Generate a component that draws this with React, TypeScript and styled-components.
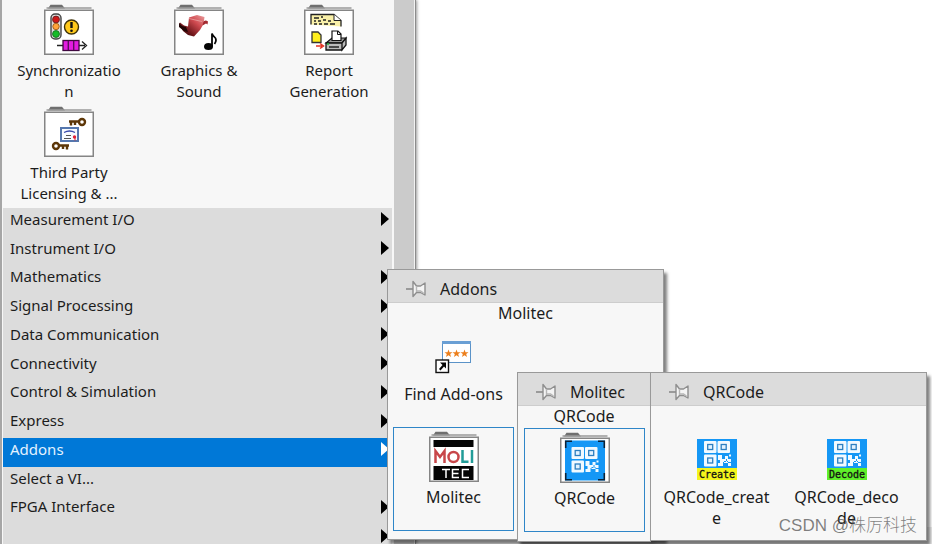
import React from 'react';
import styled, { createGlobalStyle, css } from 'styled-components';

const GlobalStyle = createGlobalStyle`
  * { box-sizing: border-box; }
  body {
    margin: 0;
    background: #fff;
    color: #1c1c1c;
    font-family: 'Noto Sans', 'Noto Sans CJK SC', sans-serif;
    font-size: 15px;
    line-height: 21px;
    overflow: hidden;
  }
  button {
    margin: 0;
    padding: 0;
    border: 0;
    background: none;
    color: inherit;
    font: inherit;
    cursor: default;
  }
  svg { display: block; flex: none; }
`;

const Desktop = styled.main`
  position: relative;
  height: 100vh;
  overflow: hidden;
`;

const Palette = styled.section`
  position: relative;
  display: flex;
  width: 416px;
  height: 100%;
  border-left: 2px solid #a6a6a6;
  border-right: 1px solid #8c8c8c;
  background: #f7f7f7;
  box-shadow: 1px 0 3px rgba(0, 0, 0, 0.4);
`;

const PaletteBody = styled.div`
  flex: 1;
  display: flex;
  flex-direction: column;
  padding: 4px 2px 0 1px;
`;

const ScrollTrack = styled.div`
  width: 21px;
  background: #cbcbcb;
  border-right: 1px solid #f2f2f2;
`;

const IconGrid = styled.div`
  flex: none;
  display: grid;
  grid-template-columns: repeat(3, 130px);
  grid-auto-rows: 102px;
  width: 388px;
  padding-left: 1px;
`;

const Cell = styled.button<{ $framed?: boolean; $gap?: number }>`
  display: flex;
  flex-direction: column;
  align-items: center;
  justify-content: flex-start;
  gap: ${({ $gap = 4 }) => $gap}px;
  white-space: nowrap;
  ${({ $framed }) =>
    $framed &&
    css`
      height: 104px;
      padding-top: 4px;
      outline: 1px solid #2f86c8;
      outline-offset: -1px;
    `}
`;

const CategoryList = styled.nav`
  flex: none;
  display: grid;
  grid-template-rows: repeat(12, 1fr);
  height: 345px;
  background: #dcdcdc;
`;

const Category = styled.button<{ $selected?: boolean }>`
  display: flex;
  align-items: center;
  justify-content: space-between;
  padding: 0 3px 6px 7px;
  text-align: left;
  background: ${({ $selected }) => ($selected ? '#0078d7' : 'transparent')};
  color: ${({ $selected }) => ($selected ? '#e4f2ff' : '#1c1c1c')};
`;

const Flyout = styled.section<{ $left: number; $top: number; $width: number; $height: number }>`
  position: absolute;
  left: ${({ $left }) => $left}px;
  top: ${({ $top }) => $top}px;
  width: ${({ $width }) => $width}px;
  height: ${({ $height }) => $height}px;
  display: flex;
  flex-direction: column;
  border: 1px solid #999;
  background: #f7f7f7;
  font-size: 16px;
  box-shadow: 3px 4px 3px rgba(0, 0, 0, 0.5);
`;

const FlyoutHeader = styled.header`
  flex: none;
  display: flex;
  align-items: center;
  gap: 13px;
  height: 33px;
  padding: 6px 0 0 17px;
  border-bottom: 1px solid #cdcdcd;
  background: #dcdcdc;
`;

const FlyoutTitle = styled.h2`
  margin: 0;
  font-size: 16px;
  font-weight: 400;
`;

const Caption = styled.p`
  margin: 0;
  height: 21px;
  text-align: center;
`;

const FlyoutGrid = styled.div<{ $inset?: number; $top?: number; $gap?: number }>`
  display: grid;
  grid-template-columns: repeat(auto-fill, 121px);
  column-gap: 9px;
  row-gap: ${({ $gap = 0 }) => $gap}px;
  padding: ${({ $top = 0 }) => $top}px 0 0 ${({ $inset = 5 }) => $inset}px;
`;

const Watermark = styled.footer`
  position: absolute;
  right: 15px;
  bottom: 6px;
  font-family: 'Liberation Sans', 'Noto Sans CJK SC', sans-serif;
  font-size: 17px;
  font-weight: 300;
  line-height: 24px;
  color: rgba(80, 80, 80, 0.72);
  white-space: nowrap;
`;

const BottomEdge = styled.div`
  position: absolute;
  left: 394px;
  right: 0;
  bottom: 0;
  height: 17px;
  background: #ececec;
`;

function Folder({ children }: { children?: React.ReactNode }) {
  return (
    <svg width="50" height="52" viewBox="0 0 50 52" aria-hidden="true">
      <path d="M4 4.500 6.500.8h11.500l3 3.700z" fill="#6f6f6f" />
      <path d="M2.500 4h45" stroke="#9a9a9a" strokeWidth="1.500" />
      <rect x=".75" y="6.250" width="48.500" height="44" fill="#fff" stroke="#858585" strokeWidth="1.500" />
      {children}
    </svg>
  );
}

function SyncArt() {
  return (
    <g>
      <rect x="7" y="10" width="10" height="25" rx="4" fill="#ddd" stroke="#444" strokeWidth="1.4" />
      <circle cx="12" cy="15.5" r="3.4" fill="#d01818" stroke="#742020" />
      <circle cx="12" cy="22.5" r="3.2" fill="#ffa43a" stroke="#a8641c" />
      <circle cx="12" cy="30" r="3.4" fill="#14bd28" stroke="#187824" />
      <circle cx="27.5" cy="23" r="7" fill="#ffc91c" stroke="#3f3208" strokeWidth="1.4" />
      <path d="M27.5 18v6" stroke="#111" strokeWidth="2.4" />
      <circle cx="27.5" cy="26.8" r="1.3" fill="#111" />
      <path d="M13 41.5h6M35 41.5h6M38 37.500l4.500 4-4.500 4" stroke="#222" strokeWidth="1.3" fill="none" />
      <rect x="19" y="36.500" width="16" height="10" fill="#e31be0" stroke="#400840" strokeWidth="1.3" />
      <path d="M24.300 37v9M29.700 37v9" stroke="#5c0e5c" strokeWidth="1.4" />
    </g>
  );
}

function GraphicsArt() {
  return (
    <g>
      <defs>
        <linearGradient id="film" x1="0" y1="1" x2="1" y2="0">
          <stop offset="0" stopColor="#120202" />
          <stop offset=".3" stopColor="#6d161a" />
          <stop offset=".65" stopColor="#cf4a50" />
          <stop offset="1" stopColor="#eba0a0" />
        </linearGradient>
      </defs>
      <path d="M15 13.500 23 11l7.500 2-1 7-3.500 6-6 6.500-6-1.500-5-4-4-7 1-1.500 4 3 4 1z" fill="url(#film)" />
      <path d="M29 19c1-3 3-3 5-1.500l-.5 3-1.500-1-3.500 2z" fill="#a32a30" />
      <path d="M5 19v4l5 4 4 1-2-5-4-1z" fill="#210506" />
      <path d="M15 14.500l13 3" stroke="#e79a9a" strokeWidth=".9" />
      <ellipse cx="34.500" cy="42.500" rx="4.500" ry="3.600" fill="#050505" />
      <path d="M38 42.500V29.500c1 4 4 3 4 6.500 0 2-.7 3-1.500 4" stroke="#050505" strokeWidth="1.800" fill="none" />
    </g>
  );
}

function ReportArt() {
  return (
    <g>
      <path d="M7 20.500V10.500h23l7 6v6" fill="#f9f0a8" stroke="#222" strokeWidth="1.300" />
      <path d="M30 10.500v6h7" fill="#fff" stroke="#222" />
      <path d="M10 14h5M17 13h2M10 17h2M14 17h3M19 16h3M24 17h3M10 20h3M15 20h3M20 20h4M26 20h5" stroke="#222" strokeWidth="1.500" />
      <path d="M8 28h6l3 3v7.500H8z" fill="#ffef1c" stroke="#333" strokeWidth="1.300" />
      <path d="M12 42h6M16 39.500l3.500 2.500-3.500 2.500" stroke="#e33120" strokeWidth="1.500" fill="none" />
      <path d="M22 39l6-5h14l-4 5z" fill="#999" stroke="#111" strokeWidth="1.200" />
      <path d="M28 36.500V27h6l3 3v6.500z" fill="#fff" stroke="#111" strokeWidth="1.200" />
      <path d="M33.500 27v3.500H37" fill="none" stroke="#111" />
      <path d="M22 39h16v7H22zM38 39l4-5v7l-4 5z" fill="#bbb" stroke="#111" strokeWidth="1.300" />
      <path d="M25 43h10" stroke="#222" strokeWidth="1.500" />
      <path d="M23 40h2" stroke="#22b53a" strokeWidth="1.500" />
    </g>
  );
}

function LicenseArt() {
  return (
    <g>
      <g stroke="#5d3708" fill="none">
        <circle cx="38" cy="16" r="3" strokeWidth="2.400" />
        <path d="M35 15.500H25M27 16v3.500M31 16v3" strokeWidth="2.400" />
        <circle cx="12" cy="40" r="3" strokeWidth="2.400" />
        <path d="M15 39.500h10M19 40v3M23 40v3.500" strokeWidth="2.400" />
      </g>
      <rect x="17" y="22" width="17" height="13" fill="#f7fbff" stroke="#5577ae" strokeWidth="2" />
      <path d="M20 26.500q5.500-3 11 0" stroke="#3648aa" strokeWidth="1.400" fill="none" />
      <path d="M22 29.500h5M20 32.500h7" stroke="#555" strokeWidth="1.200" />
      <circle cx="30.500" cy="31" r="1.700" fill="#e02336" />
      <path d="M31 32v2.500" stroke="#e02336" />
    </g>
  );
}

function MolitecArt() {
  return (
    <g>
      <rect x="4.500" y="9" width="40" height="7" fill="#050505" />
      <g fill="none" strokeWidth="2.500">
        <path d="M6.500 32V20l4.500 6 4.500-6v12" stroke="#c8474a" />
        <circle cx="24.500" cy="26" r="5" stroke="#c8474a" />
        <path d="M33.500 19v11.800h6" stroke="#229c98" />
        <path d="M43 19v13" stroke="#229c98" />
      </g>
      <rect x="4.500" y="35" width="40" height="14" fill="#050505" />
      <path d="M13 38.500h8M17 38v9M30 38.500h-6.500v8H30M23.500 42.500h6M40 38.500h-6.500v8H40" fill="none" stroke="#fff" strokeWidth="1.500" />
    </g>
  );
}

function Finder({ x, y }: { x: number; y: number }) {
  return (
    <g>
      <rect x={x} y={y} width="12.500" height="12" rx="1" fill="#f2faff" />
      <rect x={x + 3.7} y={y + 3.500} width="5" height="5" fill="#e3f3ff" stroke="#2d7fc0" strokeWidth="1.300" />
    </g>
  );
}

function QrMark() {
  return (
    <g>
      <Finder x={7} y={2} />
      <Finder x={20.500} y={2} />
      <Finder x={7} y={15.500} />
      <path
        d="M21 16h4v4h3v-3h3v3h-2v3h-3v4h-5v-3h2v-3h-2zM30 20h4v3h-4zM27 24h4v3h3v-3h-3v-2h-4zM32 15.500h2v2h-2z"
        fill="#f2faff"
      />
    </g>
  );
}

function QrFolderArt() {
  return (
    <g>
      <rect x="5" y="8.500" width="40" height="40" fill="#1597f5" />
      <path d="M5.700 16V9.200H12M38 9.200h6.300V16M5.700 41v6.800H12M38 47.800h6.300V41" fill="none" stroke="#0b2238" strokeWidth="1.600" />
      <g transform="translate(4.500 13)">
        <QrMark />
      </g>
    </g>
  );
}

const ViText = styled.text`
  font-family: 'DejaVu Sans Mono', monospace;
  font-size: 10px;
  fill: #111;
  stroke: #111;
  stroke-width: 0.3px;
`;

function QrVi({ label, band }: { label: string; band: string }) {
  return (
    <svg width="40" height="41" viewBox="0 0 40 41" aria-hidden="true">
      <rect width="40" height="29" fill="#1597f5" />
      <QrMark />
      <rect y="29" width="40" height="12" fill={band} />
      <ViText x="20" y="39" textAnchor="middle">
        {label}
      </ViText>
    </svg>
  );
}

const STAR = 'M0-4 1-1.300 4-1.300 1.700.6 2.500 3.500 0 1.800-2.500 3.500-1.700.6-4-1.300-1-1.300z';

function FindAddons() {
  return (
    <svg width="38" height="34" viewBox="0 0 38 34" aria-hidden="true">
      <rect x="7.500" y="1.500" width="28" height="21" fill="#fff" stroke="#5b93c8" />
      <path d="M7 2.500h29" stroke="#6a9fd4" strokeWidth="3" />
      {[13.5, 21.5, 29.5].map((x) => (
        <path key={x} d={STAR} transform={`translate(${x} 13.5)`} fill="#ec7f1c" />
      ))}
      <rect x="1" y="20" width="12.500" height="12.500" fill="#fff" stroke="#111" strokeWidth="1.400" />
      <path d="M5 22.500h6v6l-2-2-3.500 4-1.500-1.500L7.500 25z" fill="#050505" />
    </svg>
  );
}

function Pin() {
  return (
    <svg width="22" height="18" viewBox="0 0 22 18" aria-hidden="true">
      <path d="M1 9h7" stroke="#9a9a9a" strokeWidth="2" />
      <path d="M8 1.500 11.500 6h4L20 3v12l-4.500-2.500h-4L8 16.500z" fill="#f4f4f4" stroke="#8e8e8e" strokeWidth="1.400" strokeLinejoin="round" />
      <path d="M11.500 11h4l3 2M11.500 6v6" stroke="#b6b6b6" strokeWidth="1.400" fill="none" />
    </svg>
  );
}

function Arrow({ light }: { light?: boolean }) {
  return (
    <svg width="8" height="14" viewBox="0 0 8 14" aria-hidden="true">
      <path d="M0 0l8 7-8 7z" fill={light ? '#fff' : '#000'} />
    </svg>
  );
}

interface ItemProps {
  icon: React.ReactNode;
  lines: string[];
  framed?: boolean;
  gap?: number;
}

function Item({ icon, lines, framed, gap }: ItemProps) {
  return (
    <Cell type="button" $framed={framed} $gap={gap}>
      {icon}
      <span>
        {lines.map((line, i) => (
          <React.Fragment key={line}>
            {i > 0 && <br />}
            {line}
          </React.Fragment>
        ))}
      </span>
    </Cell>
  );
}

function Header({ title }: { title: string }) {
  return (
    <FlyoutHeader>
      <button type="button" aria-label={`Pin ${title}`}>
        <Pin />
      </button>
      <FlyoutTitle>{title}</FlyoutTitle>
    </FlyoutHeader>
  );
}

const categories: { name: string; leaf?: boolean }[] = [
  { name: 'Measurement I/O' },
  { name: 'Instrument I/O' },
  { name: 'Mathematics' },
  { name: 'Signal Processing' },
  { name: 'Data Communication' },
  { name: 'Connectivity' },
  { name: 'Control & Simulation' },
  { name: 'Express' },
  { name: 'Addons' },
  { name: 'Select a VI...', leaf: true },
  { name: 'FPGA Interface' },
  { name: '' },
];

export default function App() {
  return (
    <>
      <GlobalStyle />
      <Desktop>
        <BottomEdge />
        <Palette>
          <PaletteBody>
            <IconGrid>
              <Item icon={<Folder><SyncArt /></Folder>} lines={['Synchronizatio', 'n']} />
              <Item icon={<Folder><GraphicsArt /></Folder>} lines={['Graphics &', 'Sound']} />
              <Item icon={<Folder><ReportArt /></Folder>} lines={['Report', 'Generation']} />
              <Item icon={<Folder><LicenseArt /></Folder>} lines={['Third Party', 'Licensing & ...']} />
            </IconGrid>
            <CategoryList aria-label="Categories">
              {categories.map(({ name, leaf }) => (
                <Category key={name} type="button" $selected={name === 'Addons'}>
                  <span>{name}</span>
                  {!leaf && <Arrow light={name === 'Addons'} />}
                </Category>
              ))}
            </CategoryList>
          </PaletteBody>
          <ScrollTrack />
        </Palette>

        <Flyout $left={387} $top={269} $width={277} $height={271}>
          <Header title="Addons" />
          <Caption>Molitec</Caption>
          <FlyoutGrid $top={16} $gap={22}>
            <Item icon={<FindAddons />} lines={['Find Add-ons']} gap={10} />
            <span />
            <Item framed icon={<Folder><MolitecArt /></Folder>} lines={['Molitec']} />
          </FlyoutGrid>
        </Flyout>

        <Flyout $left={517} $top={372} $width={134} $height={170}>
          <Header title="Molitec" />
          <Caption>QRCode</Caption>
          <FlyoutGrid $inset={6} $top={1}>
            <Item framed icon={<Folder><QrFolderArt /></Folder>} lines={['QRCode']} />
          </FlyoutGrid>
        </Flyout>

        <Flyout $left={650} $top={372} $width={277} $height={169}>
          <Header title="QRCode" />
          <FlyoutGrid $top={33}>
            <Item icon={<QrVi label="Create" band="#f4f51c" />} lines={['QRCode_creat', 'e']} gap={7} />
            <Item icon={<QrVi label="Decode" band="#5ff02a" />} lines={['QRCode_deco', 'de']} gap={7} />
          </FlyoutGrid>
        </Flyout>

        <Watermark>CSDN @株厉科技</Watermark>
      </Desktop>
    </>
  );
}
